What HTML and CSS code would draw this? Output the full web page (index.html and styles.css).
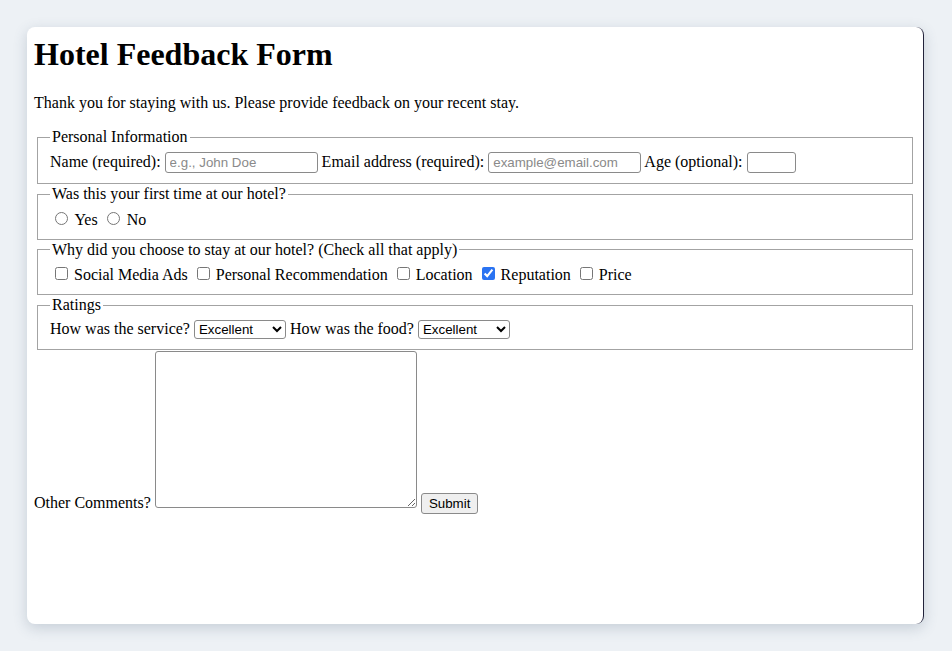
FILE: index.html
```html
<!DOCTYPE html>
<html lang="en">
<head>
<meta charset="utf-8">
<title>Hotel Feedback Form</title>
<link rel="stylesheet" href="styles.css">
</head>
<body>
<main class="card">
  <h1 class="title">Hotel Feedback Form</h1>
  <p class="intro">Thank you for staying with us. Please provide feedback on your recent stay.</p>
  <form class="form">
    <fieldset class="group">
      <legend class="legend">Personal Information</legend>
      <label for="name">Name (required):</label>
      <input class="text" id="name" type="text" placeholder="e.g., John Doe">
      <label for="email">Email address (required):</label>
      <input class="text" id="email" type="email" placeholder="example@email.com">
      <label for="age">Age (optional):</label>
      <input class="text age" id="age" type="number">
    </fieldset>
    <fieldset class="group">
      <legend class="legend">Was this your first time at our hotel?</legend>
      <input class="radio" type="radio" name="first" id="yes"> <label for="yes">Yes</label>
      <input class="radio" type="radio" name="first" id="no"> <label for="no">No</label>
    </fieldset>
    <fieldset class="group">
      <legend class="legend">Why did you choose to stay at our hotel? (Check all that apply)</legend>
      <input class="check" type="checkbox" id="c1"> <label for="c1">Social Media Ads</label>
      <input class="check" type="checkbox" id="c2"> <label for="c2">Personal Recommendation</label>
      <input class="check" type="checkbox" id="c3"> <label for="c3">Location</label>
      <input class="check" type="checkbox" id="c4" checked> <label for="c4">Reputation</label>
      <input class="check" type="checkbox" id="c5"> <label for="c5">Price</label>
    </fieldset>
    <fieldset class="group">
      <legend class="legend">Ratings</legend>
      <label for="service">How was the service?</label>
      <select class="select" id="service"><option>Excellent</option><option>Good</option><option>Fair</option><option>Poor</option></select>
      <label for="food">How was the food?</label>
      <select class="select" id="food"><option>Excellent</option><option>Good</option><option>Fair</option><option>Poor</option></select>
    </fieldset>
    <label for="comments">Other Comments?</label>
    <textarea class="comments" id="comments"></textarea>
    <button class="submit" type="submit">Submit</button>
  </form>
</main>
</body>
</html>
```

FILE: styles.css
```css
html, body {
  margin: 0;
  padding: 0;
}
body {
  background: #edf1f5;
  padding: 27px 28px 27px 27px;
  box-sizing: border-box;
  height: 651px;
  font-family: "Liberation Serif", "Times New Roman", serif;
  font-size: 16px;
  color: #000;
}
.card {
  box-sizing: border-box;
  height: 597px;
  background: #fff;
  border-radius: 8px;
  border-right: 1px solid #22223a;
  box-shadow: 0 4px 14px rgba(60, 80, 110, 0.22);
  padding: 9px 8px 8px 7px;
}
.title {
  font-size: 32px;
  font-weight: bold;
  margin: 0 0 21.44px 0;
}
.intro {
  margin: 0 0 16px 0;
}
.form {
  margin: 0;
}
.group {
  margin: 0 2px 0 3px;
  padding: 5.6px 12px 10px 12px;
  border: 1px solid #a3a3a3;
}
.group + .group {
  margin-top: 1px;
}
.legend {
  padding: 0 2px;
}
.text {
  box-sizing: border-box;
  width: 153px;
  height: 21px;
  font-family: "Liberation Sans", Arial, sans-serif;
  font-size: 13.33px;
  padding: 1px 4px;
  border: 1px solid #8a8a8a;
  border-radius: 3px;
  margin: 0;
  color: #000;
}
.text::placeholder {
  color: #8a8a8a;
}
.age {
  width: 49px;
}
.radio {
  margin: 3px 3px 0 5px;
}
.check {
  margin: 3px 2px 0 5px;
  accent-color: #2a73f2;
}
.select {
  box-sizing: border-box;
  width: 92px;
  height: 19px;
  font-family: "Liberation Sans", Arial, sans-serif;
  font-size: 13.33px;
  margin: 0;
  border: 1px solid #8a8a8a;
  border-radius: 3px;
  background: #fff;
  color: #000;
}
.comments {
  box-sizing: border-box;
  width: 262px;
  height: 157px;
  margin: 1px 0 0 0;
  border: 1px solid #8a8a8a;
  border-radius: 3px;
  vertical-align: baseline;
}
.submit {
  box-sizing: border-box;
  font-family: "Liberation Sans", Arial, sans-serif;
  font-size: 13.33px;
  height: 21px;
  padding: 1px 7px;
  border: 1px solid #8a8a8a;
  border-radius: 3px;
  background: #efefef;
  color: #000;
  margin: 0;
}
```
